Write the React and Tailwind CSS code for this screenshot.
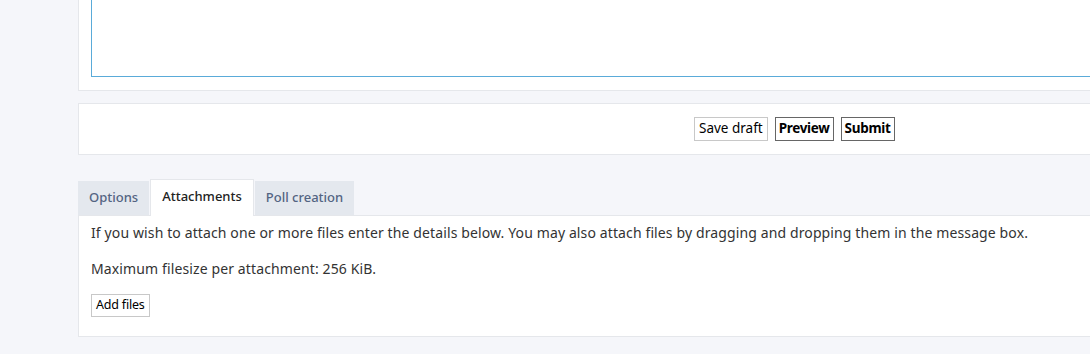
import React from "react";

const tabs = [
  { label: "Options", active: false },
  { label: "Attachments", active: true },
  { label: "Poll creation", active: false },
];

export default function App() {
  return (
    <div
      className="w-[1090px] h-[354px] overflow-hidden bg-[#f5f6fa] text-[#333] pl-[78px]"
      style={{ fontFamily: '"Noto Sans", "Open Sans", sans-serif' }}
    >
      {/* message box panel */}
      <div className="w-[1100px] h-[111px] -mt-[20px] bg-white border border-[#e5e7eb] pl-[12px] pt-[10px]">
        <div className="h-[86px] border border-[#5aabd9]"></div>
      </div>

      {/* submit buttons */}
      <div className="mt-[12px] w-[1100px] h-[52px] bg-white border border-[#e5e7eb] flex items-center pl-[615px] gap-[7px] text-[13.5px] text-black">
        <button className="h-[24px] px-[4px] border border-[#c8c8c8] bg-white leading-none">Save draft</button>
        <button className="h-[24px] px-[3px] border border-[#666] bg-white font-bold leading-none tracking-[-0.3px]">Preview</button>
        <button className="h-[24px] px-[3px] border border-[#666] bg-white font-bold leading-none tracking-[-0.3px]">Submit</button>
      </div>

      {/* tabs */}
      <div className="mt-[24px] flex items-end gap-[1px] h-[36px] text-[13px]">
        {tabs.map((t) =>
          t.active ? (
            <div
              key={t.label}
              className="h-[37px] px-[11px] pb-[3px] flex items-center bg-white border border-b-0 border-[#e5e7eb] text-[#222] -mb-[1px] relative z-10 font-medium"
            >
              {t.label}
            </div>
          ) : (
            <div
              key={t.label}
              className="h-[34px] px-[11px] flex items-center bg-[#e4e8ee] text-[#536482] font-medium"
            >
              {t.label}
            </div>
          )
        )}
      </div>

      {/* attachment panel */}
      <div className="w-[1100px] h-[122px] bg-white border border-[#e5e7eb] pl-[12px] pt-[7px] text-[14px] leading-[20px] tracking-[0.12px] text-[#333]">
        <p>If you wish to attach one or more files enter the details below. You may also attach files by dragging and dropping them in the message box.</p>
        <p className="mt-[16px]">Maximum filesize per attachment: 256 KiB.</p>
        <button className="mt-[15px] h-[23px] px-[4px] border border-[#c8c8c8] bg-white text-[12.5px] tracking-[-0.2px] text-black leading-none">
          Add files
        </button>
      </div>
    </div>
  );
}
